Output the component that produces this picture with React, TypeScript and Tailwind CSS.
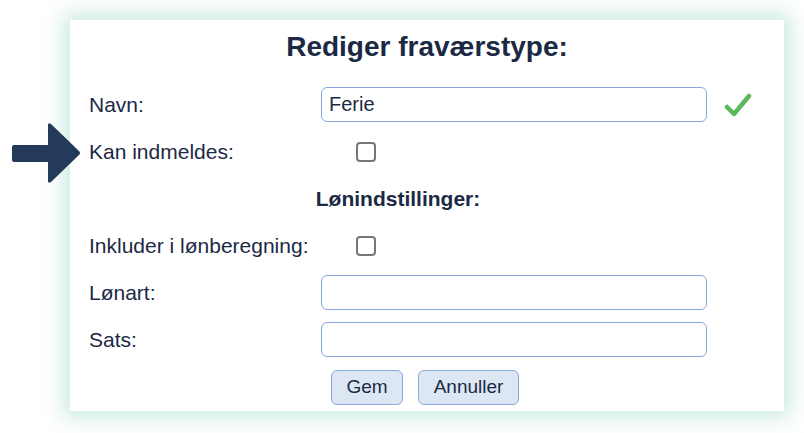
import React, { useState } from 'react';

const font = { fontFamily: '"Liberation Sans", Arial, sans-serif' };

const Checkbox: React.FC<{ checked: boolean; onChange: () => void }> = ({ checked, onChange }) => (
  <button
    type="button"
    onClick={onChange}
    className="ml-[35px] flex h-[20px] w-[20px] items-center justify-center rounded-[4px] border-2 border-[#767676] bg-white"
  >
    {checked && <span className="h-[10px] w-[10px] rounded-[2px] bg-[#1b2945]" />}
  </button>
);

const Row: React.FC<{ label: string; children?: React.ReactNode }> = ({ label, children }) => (
  <div className="flex h-[47px] items-center">
    <div className="w-[232px] shrink-0">{label}</div>
    {children}
  </div>
);

const TextField: React.FC<{ value: string; onChange: (v: string) => void }> = ({ value, onChange }) => (
  <input
    type="text"
    value={value}
    onChange={(e) => onChange(e.target.value)}
    className="box-border h-[35px] w-[386px] rounded-[6px] border border-[#88a8dc] bg-white px-[7px] text-[20px] text-[#1b2945] outline-none"
    style={font}
  />
);

const App: React.FC = () => {
  const [name, setName] = useState('Ferie');
  const [canEnroll, setCanEnroll] = useState(false);
  const [includePay, setIncludePay] = useState(false);
  const [payType, setPayType] = useState('');
  const [rate, setRate] = useState('');

  return (
    <div className="relative min-h-[433px] bg-white pl-[70px] pt-[20px]" style={font}>
      {/* annotation arrow */}
      <svg className="absolute left-[10px] top-[120px]" width="74" height="66" viewBox="0 0 74 66">
        <path
          d="M4 25 L38 25 L38 5 Q38 2 41 4 L69 31 Q71 33 69 35 L41 62 Q38 64 38 61 L38 42 L4 42 Q2 42 2 40 L2 27 Q2 25 4 25 Z"
          fill="#243a5b"
        />
      </svg>

      <div className="w-[714px] bg-white pb-[6px] pl-[19px] text-[21px] text-[#1b2945] shadow-[0_0_20px_6px_rgba(110,195,175,0.38)]">
        <div className="h-[61px] pr-[19px] pt-[10px] text-center text-[28px] font-bold leading-[34px]">
          Rediger fraværstype:
        </div>

        <Row label="Navn:">
          <TextField value={name} onChange={setName} />
          <svg className="ml-[17px]" width="28" height="26" viewBox="0 0 28 26">
            <polyline
              points="3,15 10,22 25,4"
              fill="none"
              stroke="#5cb85c"
              strokeWidth="4.5"
              strokeLinecap="round"
              strokeLinejoin="round"
            />
          </svg>
        </Row>
        <Row label="Kan indmeldes:">
          <Checkbox checked={canEnroll} onChange={() => setCanEnroll(!canEnroll)} />
        </Row>
        <div className="flex h-[47px] w-[618px] items-center justify-center font-bold">Lønindstillinger:</div>
        <Row label="Inkluder i lønberegning:">
          <Checkbox checked={includePay} onChange={() => setIncludePay(!includePay)} />
        </Row>
        <Row label="Lønart:">
          <TextField value={payType} onChange={setPayType} />
        </Row>
        <Row label="Sats:">
          <TextField value={rate} onChange={setRate} />
        </Row>

        <div className="mt-[7px] flex justify-center gap-[15px] pr-[23px]">
          <button
            type="button"
            className="h-[35px] w-[72px] rounded-[6px] border border-[#8aaade] bg-[#dde7f4] text-[19px] text-[#1b2945]"
          >
            Gem
          </button>
          <button
            type="button"
            className="h-[35px] w-[101px] rounded-[6px] border border-[#8aaade] bg-[#dde7f4] text-[19px] text-[#1b2945]"
          >
            Annuller
          </button>
        </div>
      </div>
    </div>
  );
};

export default App;
